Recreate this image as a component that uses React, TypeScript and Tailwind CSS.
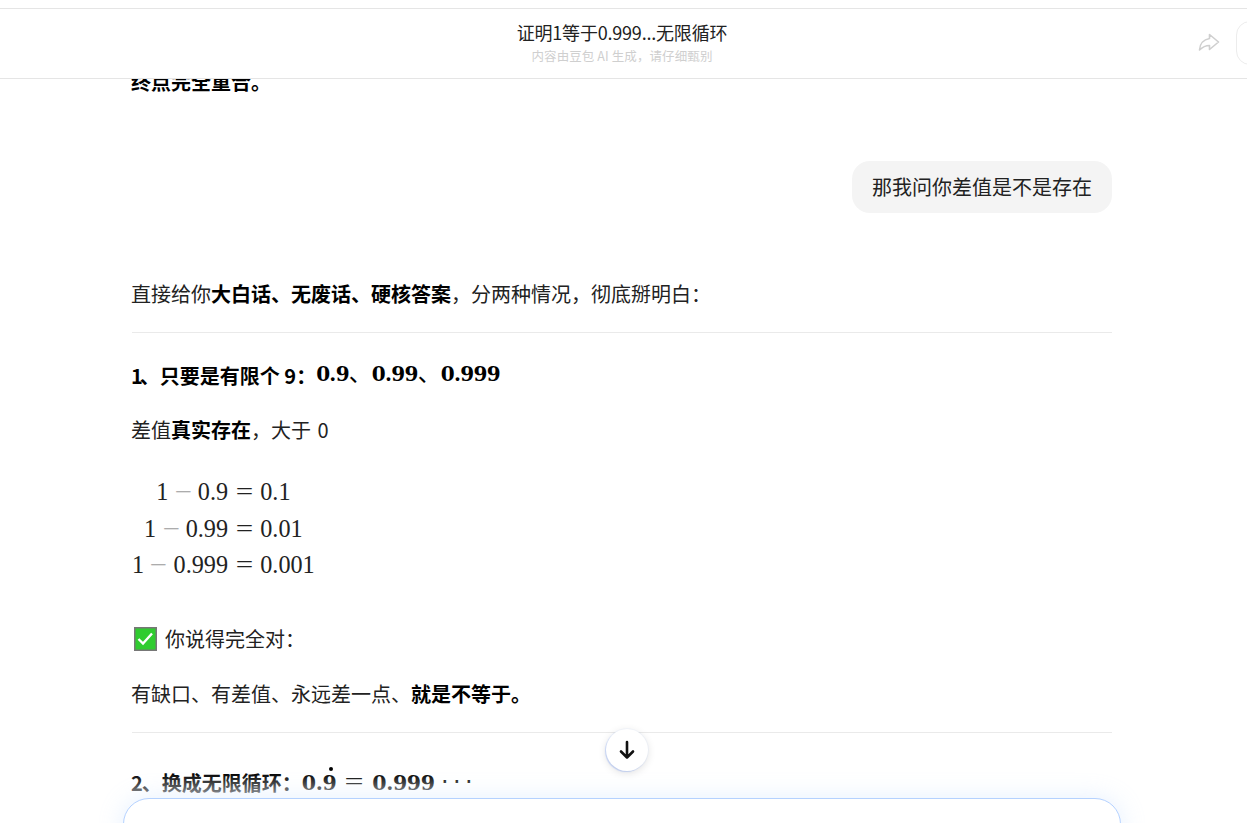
import React from "react";

const cjk = { fontFamily: '"Noto Sans CJK SC", sans-serif' };

function Bin({ children }: { children: React.ReactNode }) {
  return <span className="mx-[5.37px] inline-block w-[18.8px] scale-x-[1.28] text-center text-[#9a9a9a]">{children}</span>;
}

function Rel({ children }: { children: React.ReactNode }) {
  return <span className="mx-[6.73px] inline-block w-[18.8px] scale-x-[1.28] text-center">{children}</span>;
}

function MathLine({ a, b, c }: { a: string; b: string; c: string }) {
  return (
    <div className="h-[36.5px] whitespace-pre font-['Liberation_Serif',serif] text-[24.2px] leading-[36.5px] text-[#222]">
      {a}<Bin>−</Bin>{b}<Rel>=</Rel>{c}
    </div>
  );
}

function Bold({ children }: { children: React.ReactNode }) {
  return <span className="font-['DejaVu_Serif',serif] text-[20px] font-bold tracking-[-0.7px]">{children}</span>;
}

function BoldLarge({ children }: { children: React.ReactNode }) {
  return <span className="font-['DejaVu_Serif',serif] text-[20.5px] font-bold tracking-[-0.4px]">{children}</span>;
}

export default function App() {
  return (
    <div className="relative h-[823px] w-[1247px] overflow-hidden bg-white text-[20px] text-[#222]" style={cjk}>
      <div className="h-[8px] bg-white" />
      <header className="relative z-10 flex h-[71px] items-center border-y border-[#e5e5e5] bg-white">
        <div className="flex flex-1 flex-col items-center pr-[3px]">
          <div className="-mt-[3px] h-[26px] text-[18px] leading-[26px] tracking-[-0.2px] text-[#222]">证明1等于0.999...无限循环</div>
          <div className="mt-[2px] h-[18px] text-[12.5px] leading-[18px] tracking-[0.1px] text-[#cfcfcf]">内容由豆包 AI 生成，请仔细甄别</div>
        </div>
        <svg className="absolute left-[1198px] top-[24px]" width="22" height="20" viewBox="0 0 22 20" fill="none" stroke="#cfcfcf" strokeWidth="1.6" strokeLinejoin="round">
          <path d="M11.500 1.500 20.500 9l-9 7.500v-4c-4 0-7 1.500-10 4.500.3-6 4-10.500 10-11.500V1.500Z" />
        </svg>
        <div className="absolute left-[1236px] top-[12px] h-[44px] w-[40px] rounded-[14px] border border-[#ececec]" />
      </header>

      <main className="-mt-[11px] ml-[131px] w-[981px] leading-[28px]">
        <p className="h-[28px] font-bold text-black">终点完全重合。</p>

        <div className="mt-[65px] flex justify-end">
          <div className="flex h-[52px] items-center rounded-[18px] bg-[#f4f4f4] px-[20px]">那我问你差值是不是存在</div>
        </div>

        <p className="mt-[67px] h-[28px]">
          直接给你<b className="text-black">大白话、无废话、硬核答案</b>，分两种情况，彻底掰明白：
        </p>
        <hr className="ml-px mt-[24px] border-[#eaeaea]" />

        <p className="mt-[27px] h-[28px] whitespace-nowrap font-bold text-black">
          <span className="tracking-[-3px]">1</span>、只要是有限个 9：
          <span className="relative -top-[3px] text-[23px] font-normal"><Bold>0.9</Bold>、<Bold>0.99</Bold>、<Bold>0.999</Bold></span>
        </p>
        <p className="mt-[28px] h-[28px]">
          差值<b className="text-black">真实存在</b>，大于 <span className="ml-[2px]">0</span>
        </p>

        <div className="ml-px mt-[30px] inline-flex flex-col items-center">
          <MathLine a="1" b="0.9" c="0.1" />
          <MathLine a="1" b="0.99" c="0.01" />
          <MathLine a="1" b="0.999" c="0.001" />
        </div>

        <div className="mt-[41px] flex h-[28px] items-center">
          <svg className="ml-[3px] mr-[8px]" width="23" height="24" viewBox="0 0 23 24">
            <rect x="0.75" y="0.75" width="21.500" height="22.500" fill="#2fcc2f" stroke="#777" strokeWidth="1.500" />
            <path d="M4.500 12 9 16.500 18 6.500" fill="none" stroke="#fff" strokeWidth="2.400" />
          </svg>
          <span>你说得完全对：</span>
        </div>

        <p className="mt-[27px] h-[28px]">
          有缺口、有差值、永远差一点、<b className="text-black">就是不等于。</b>
        </p>
        <hr className="ml-px mt-[24px] border-[#eaeaea]" />

        <p className="mt-[36px] h-[28px] whitespace-nowrap font-bold text-black">
          <span className="tracking-[-1px]">2</span>、换成无限循环：
          <span className="relative -top-[1px]">
            <BoldLarge>0.</BoldLarge>
            <span className="relative">
              <BoldLarge>9</BoldLarge>
              <span className="absolute left-[7px] top-[0px] h-[4px] w-[4px] rounded-full bg-black" />
            </span>
            <span className="mx-[8px] inline-block w-[20px] scale-x-[1.4] text-center font-['Liberation_Serif',serif] text-[24.2px] font-normal">=</span>
            <BoldLarge>0.999</BoldLarge>
            <span className="ml-[6px] font-['Liberation_Serif',serif] text-[24px] font-normal tracking-[4px]">⋅⋅⋅</span>
          </span>
        </p>
      </main>

      <div className="pointer-events-none absolute inset-x-0 bottom-0 h-[50px] bg-gradient-to-b from-white/0 via-white/60 to-white" />
      <div className="absolute left-[123px] top-[798px] h-[60px] w-[998px] rounded-[26px] border border-[#b5d2ff] bg-white shadow-[0_0_24px_rgba(170,205,255,0.3)]" />

      <button className="absolute left-[606px] top-[729px] flex h-[42px] w-[42px] items-center justify-center rounded-full bg-white shadow-[0_2px_8px_rgba(0,0,0,0.12),0_0_0_1px_rgba(190,210,255,0.12),-1px_1px_1px_rgba(80,130,255,0.25)]">
        <svg width="16" height="20" viewBox="0 0 16 20" fill="none" stroke="#111" strokeWidth="2.600" strokeLinecap="round" strokeLinejoin="round">
          <path d="M8 2v15.500M2 11.500l6 6 6-6" />
        </svg>
      </button>
    </div>
  );
}
